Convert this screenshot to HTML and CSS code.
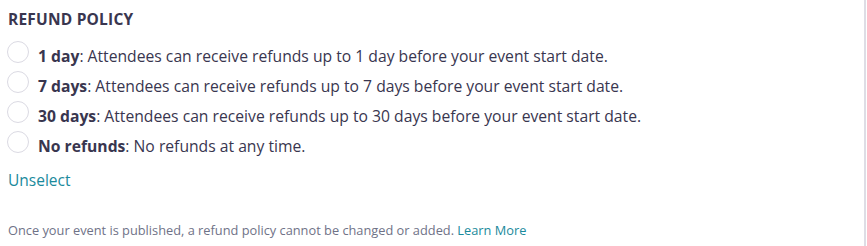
FILE: index.html
```html
<!DOCTYPE html>
<html lang="en">
  <head>
    <meta charset="UTF-8" />
    <meta name="viewport" content="width=device-width, initial-scale=1.0" />
    <title>Refund Policy</title>
    <link rel="stylesheet" href="styles.css">
  </head>
  <body>
    <div class="panel">
      <h3 class="section-title">REFUND POLICY</h3>

      <div class="options">
        <label class="option">
          <input type="radio" name="refund" />
          <span class="radio"></span>
          <span class="label"><b>1 day</b>: Attendees can receive refunds up to 1 day before your event start date.</span>
        </label>
        <label class="option">
          <input type="radio" name="refund" />
          <span class="radio"></span>
          <span class="label"><b>7 days</b>: Attendees can receive refunds up to 7 days before your event start date.</span>
        </label>
        <label class="option">
          <input type="radio" name="refund" />
          <span class="radio"></span>
          <span class="label"><b>30 days</b>: Attendees can receive refunds up to 30 days before your event start date.</span>
        </label>
        <label class="option">
          <input type="radio" name="refund" />
          <span class="radio"></span>
          <span class="label"><b>No refunds</b>: No refunds at any time.</span>
        </label>
      </div>

      <a class="link unselect" href="#">Unselect</a>

      <p class="note">
        Once your event is published, a refund policy cannot be changed or added.
        <a class="link" href="#">Learn More</a>
      </p>
    </div>
  </body>
</html>
```

FILE: styles.css
```css
body {
  margin: 0;
  background: #fff;
  font-family: "Open Sans", Arial, sans-serif;
  color: #39364f;
}
.panel {
  height: 246px;
  box-sizing: border-box;
  border-right: 2px solid #dedde5;
  margin-right: 1px;
  padding: 9px 8px 0;
}
.section-title {
  margin: 0 0 16px;
  font-size: 15.5px;
  font-weight: 700;
  letter-spacing: 0.2px;
  line-height: 20px;
}
.options {
  display: flex;
  flex-direction: column;
  gap: 8px;
}
.option {
  display: flex;
  align-items: flex-start;
  gap: 9px;
  font-size: 15.7px;
  line-height: 22px;
  cursor: pointer;
}
.option input {
  display: none;
}
.radio {
  width: 20px;
  height: 20px;
  flex: none;
  margin-top: -4px;
  margin-left: -1px;
  border: 1px solid #dbdae3;
  border-radius: 50%;
  background: #fff;
}
.label b {
  font-weight: 700;
}
.link {
  color: #1a8a9c;
  text-decoration: none;
}
.unselect {
  display: inline-block;
  margin-top: 12px;
  font-size: 15.5px;
}
.note {
  margin: 30px 0 0;
  font-size: 12.8px;
  color: #6f7287;
}
```
